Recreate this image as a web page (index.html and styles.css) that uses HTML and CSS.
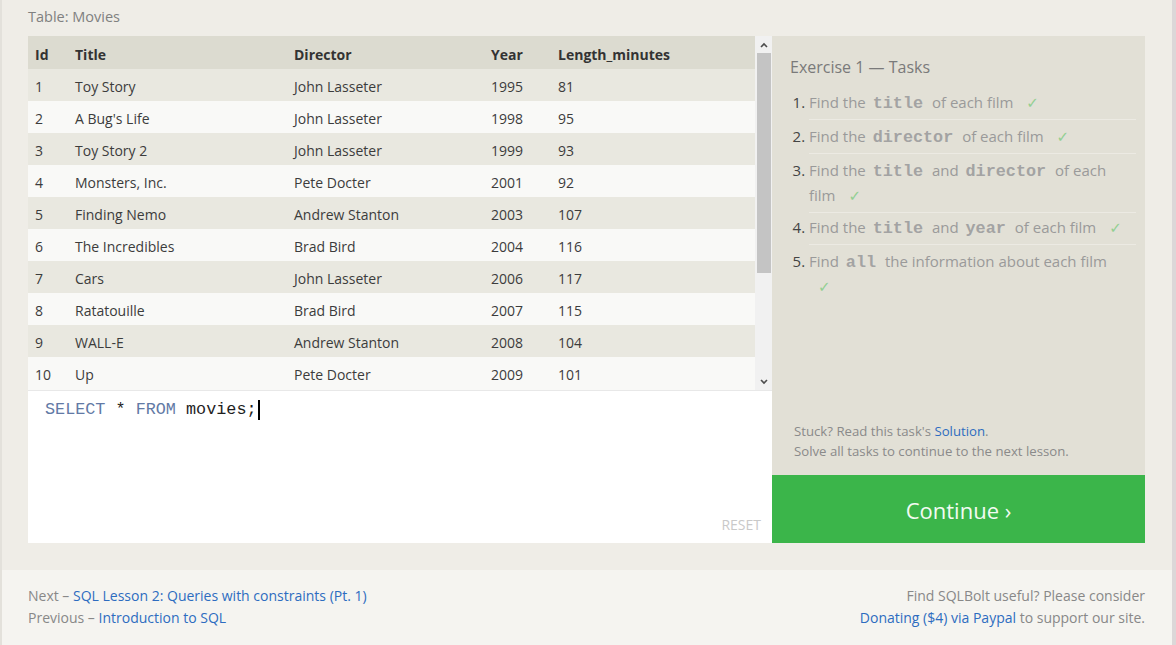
FILE: index.html
```html
<!DOCTYPE html>
<html>
<head>
<meta charset="utf-8">
<link rel="stylesheet" href="styles.css">
</head>
<body>
<div class="page">
  <div class="caption">Table: Movies</div>
  <div class="main">
    <div class="left">
      <div class="tablebox">
        <div class="tableview">
          <table class="movies">
            <thead>
              <tr><th class="c-id">Id</th><th class="c-title">Title</th><th class="c-dir">Director</th><th class="c-year">Year</th><th>Length_minutes</th></tr>
            </thead>
            <tbody>
              <tr><td>1</td><td>Toy Story</td><td>John Lasseter</td><td>1995</td><td>81</td></tr>
              <tr><td>2</td><td>A Bug's Life</td><td>John Lasseter</td><td>1998</td><td>95</td></tr>
              <tr><td>3</td><td>Toy Story 2</td><td>John Lasseter</td><td>1999</td><td>93</td></tr>
              <tr><td>4</td><td>Monsters, Inc.</td><td>Pete Docter</td><td>2001</td><td>92</td></tr>
              <tr><td>5</td><td>Finding Nemo</td><td>Andrew Stanton</td><td>2003</td><td>107</td></tr>
              <tr><td>6</td><td>The Incredibles</td><td>Brad Bird</td><td>2004</td><td>116</td></tr>
              <tr><td>7</td><td>Cars</td><td>John Lasseter</td><td>2006</td><td>117</td></tr>
              <tr><td>8</td><td>Ratatouille</td><td>Brad Bird</td><td>2007</td><td>115</td></tr>
              <tr><td>9</td><td>WALL-E</td><td>Andrew Stanton</td><td>2008</td><td>104</td></tr>
              <tr><td>10</td><td>Up</td><td>Pete Docter</td><td>2009</td><td>101</td></tr>
            </tbody>
          </table>
        </div>
        <div class="scrollbar">
          <div class="sb-btn"><svg width="8" height="6" viewBox="0 0 8 6"><polyline points="1,5 4,2 7,5" fill="none" stroke="#4d4d4d" stroke-width="1.6"/></svg></div>
          <div class="sb-track"><div class="sb-thumb"></div></div>
          <div class="sb-btn"><svg width="8" height="6" viewBox="0 0 8 6"><polyline points="1,1 4,4 7,1" fill="none" stroke="#4d4d4d" stroke-width="1.6"/></svg></div>
        </div>
      </div>
      <div class="editor">
        <div class="code"><span class="kw">SELECT</span> * <span class="kw">FROM</span> movies;<span class="cursor"></span></div>
        <div class="reset">RESET</div>
      </div>
    </div>
    <div class="right">
      <div class="tasks">
        <div class="tasks-title">Exercise 1 — Tasks</div>
        <ol class="task-list">
          <li>Find the <code>title</code> of each film <span class="check">✓</span></li>
          <li>Find the <code>director</code> of each film <span class="check">✓</span></li>
          <li>Find the <code>title</code> and <code>director</code> of each film <span class="check">✓</span></li>
          <li>Find the <code>title</code> and <code>year</code> of each film <span class="check">✓</span></li>
          <li>Find <code>all</code> the information about each film <span class="check">✓</span></li>
        </ol>
        <div class="stuck">
          <div>Stuck? Read this task's <a class="link">Solution</a>.</div>
          <div>Solve all tasks to continue to the next lesson.</div>
        </div>
      </div>
      <div class="continue">Continue ›</div>
    </div>
  </div>
</div>
<div class="footer">
  <div class="foot-left">
    <div>Next – <a class="link">SQL Lesson 2: Queries with constraints (Pt. 1)</a></div>
    <div>Previous – <a class="link">Introduction to SQL</a></div>
  </div>
  <div class="foot-right">
    <div>Find SQLBolt useful? Please consider</div>
    <div><a class="link">Donating ($4) via Paypal</a> to support our site.</div>
  </div>
</div>
</body>
</html>
```

FILE: styles.css
```css
html, body {
  margin: 0;
  padding: 0;
}
body {
  width: 1176px;
  height: 645px;
  box-sizing: border-box;
  background: #efede7;
  border-left: 2px solid #e3e1db;
  border-right: 4px solid #dcd7d8;
  font-family: "Open Sans", "Liberation Sans", sans-serif;
  overflow: hidden;
  display: flex;
  flex-direction: column;
}
.page {
  padding: 0 27px 0 26px;
}
.caption {
  padding-top: 7px;
  line-height: 20px;
  height: 20px;
  margin-bottom: 9px;
  font-size: 14.5px;
  color: #808080;
}
.main {
  display: flex;
  height: 507px;
}
.left {
  width: 744px;
  display: flex;
  flex-direction: column;
}
.tablebox {
  height: 354px;
  display: flex;
}
.tableview {
  width: 727px;
  overflow: hidden;
  background: #f9f9f7;
}
.movies {
  width: 727px;
  border-collapse: collapse;
  font-size: 14px;
  color: #3c3c3c;
}
.movies th {
  box-sizing: border-box;
  height: 33px;
  padding: 3px 0 0 7px;
  text-align: left;
  font-weight: 700;
  color: #333;
  background: #dcdbd0;
}
.movies td {
  box-sizing: border-box;
  height: 32px;
  padding: 3px 0 0 7px;
}
.movies .c-id { width: 40px; }
.movies .c-title { width: 219px; }
.movies .c-dir { width: 197px; }
.movies .c-year { width: 67px; }
.movies tbody tr:nth-child(odd) { background: #e9e8e0; }
.movies tbody tr:nth-child(even) { background: #f9f9f7; }

.scrollbar {
  width: 17px;
  background: #f1f1f1;
  display: flex;
  flex-direction: column;
}
.sb-btn {
  height: 17px;
  display: flex;
  align-items: center;
  justify-content: center;
  background: #f1f1f1;
}
.sb-track {
  flex: 1;
  background: #f1f1f1;
}
.sb-thumb {
  height: 220px;
  margin: 0 1px 0 2px;
  background: #c4c4c4;
}

.editor {
  flex: 1;
  background: #fff;
  border-top: 1px solid #e8e8e8;
  display: flex;
  flex-direction: column;
  justify-content: space-between;
}
.code {
  padding: 8px 0 0 17px;
  line-height: 22px;
  font-family: "Liberation Mono", "DejaVu Sans Mono", monospace;
  font-size: 16.8px;
  color: #1e1e1e;
  display: flex;
  align-items: center;
  white-space: pre;
}
.kw { color: #6279a5; }
.cursor {
  display: inline-block;
  width: 2px;
  height: 20px;
  background: #000;
  margin-left: 1px;
}
.reset {
  align-self: flex-end;
  padding: 0 11px 8px 0;
  line-height: 20px;
  font-size: 14px;
  color: #c9c9c9;
}

.right {
  width: 373px;
  display: flex;
  flex-direction: column;
}
.tasks {
  flex: 1;
  background: #e2e0d6;
  padding: 19px 9px 14px 18px;
  display: flex;
  flex-direction: column;
}
.tasks-title {
  font-size: 16px;
  line-height: 24px;
  color: #7a7a7a;
}
.task-list {
  margin: 7px 0 0 0;
  padding-left: 19px;
  font-size: 15px;
  line-height: 25px;
  color: #9a9a9a;
}
.task-list li {
  padding: 4px 12px 4px 0;
  border-bottom: 1px solid #eceae3;
}
.task-list li:nth-child(4) {
  margin-top: -2px;
}
.task-list li:last-child {
  border-bottom: none;
}
.task-list li::marker {
  color: #444;
}
.task-list code {
  font-family: "Liberation Mono", "DejaVu Sans Mono", monospace;
  font-weight: 700;
  font-size: 16.8px;
  line-height: 1;
  color: #a3a3a3;
  padding: 0 5px 0 3px;
}
.check {
  color: #92cf92;
  font-family: "DejaVu Sans", sans-serif;
  font-size: 15px;
  line-height: 1;
  margin-left: 9px;
}
.stuck {
  margin-top: auto;
  padding-left: 4px;
  font-size: 13.2px;
  line-height: 20px;
  color: #8a8a8a;
}
.link {
  color: #2d6cc0;
  text-decoration: none;
}
.continue {
  height: 68px;
  padding-top: 2px;
  box-sizing: border-box;
  background: #3bb54a;
  color: #f2fbf2;
  font-size: 22px;
  display: flex;
  align-items: center;
  justify-content: center;
}

.footer {
  margin-top: 27px;
  flex: 1;
  background: #f5f4f0;
  padding: 15px 27px 0 26px;
  display: flex;
  justify-content: space-between;
  font-size: 14px;
  line-height: 22px;
  color: #888;
}
.foot-right {
  text-align: right;
}
```
